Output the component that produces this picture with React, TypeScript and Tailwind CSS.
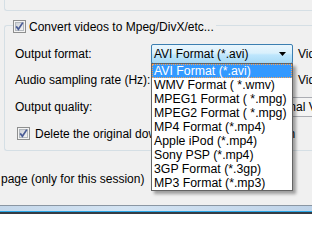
import React from "react"

const formats = [
  "AVI Format (*.avi)",
  "WMV Format ( *.wmv)",
  "MPEG1 Format ( *.mpg)",
  "MPEG2 Format ( *.mpg)",
  "MP4 Format (*.mp4)",
  "Apple iPod (*.mp4)",
  "Sony PSP (*.mp4)",
  "3GP Format (*.3gp)",
  "MP3 Format (*.mp3)",
]

function CheckBox() {
  return (
    <svg width="13" height="13" viewBox="0 0 13 13" className="shrink-0">
      <defs>
        <linearGradient id="cbfill" x1="0" y1="0" x2="1" y2="1">
          <stop offset="0" stopColor="#cbcfd5" />
          <stop offset="1" stopColor="#f6f6f6" />
        </linearGradient>
      </defs>
      <rect x="0.5" y="0.5" width="12" height="12" fill="#f4f4f4" stroke="#8e8f8f" />
      <rect x="2.5" y="2.5" width="8" height="8" fill="url(#cbfill)" stroke="#b3b8bd" />
      <path d="M3.2 6.4 L5.4 9.2 L9.8 2.6" fill="none" stroke="#4a5c96" strokeWidth="1.7" />
    </svg>
  )
}

function Arrow() {
  return (
    <svg width="7" height="4" viewBox="0 0 7 4" className="shrink-0">
      <path d="M0 0 H7 L3.5 4 Z" fill="#000" />
    </svg>
  )
}

export default function App() {
  return (
    <div className="relative flex h-[214px] w-[312px] flex-col overflow-hidden bg-[#f0f0f0] font-['Liberation_Sans',Arial,sans-serif] text-[12px] leading-none text-black">
      {/* box above */}
      <div className="ml-[4px] h-[11px] shrink-0 rounded-bl-[3px] border-b border-l border-[#d5dfe5]" />

      {/* conversion group */}
      <div className="mt-[14px] ml-[4px] flex h-[126px] shrink-0 flex-col rounded-l-[3px] border-t border-b border-l border-[#d5dfe5]">
        <div className="-mt-[6px] ml-[8px] flex w-fit items-center bg-[#f0f0f0] pr-[2px]">
          <CheckBox />
          <span className="ml-[3px] whitespace-nowrap">Convert videos to Mpeg/DivX/etc...</span>
        </div>

        <div className="mt-[11px] flex h-[20px] items-center whitespace-nowrap">
          <span className="w-[146px] shrink-0 pl-[10px]">Output format:</span>
          <div className="flex h-[20px] w-[142px] shrink-0 items-center justify-between rounded-[2px] border border-[#3c7fb1] bg-[linear-gradient(#eaf6fd,#d9f0fc_45%,#bee6fd_55%,#a7d9f5)] pr-[6px] pl-[2px]">
            <span>AVI Format (*.avi)</span>
            <Arrow />
          </div>
          <span className="ml-[5px]">Video codec:</span>
        </div>

        <div className="mt-[6px] flex h-[20px] items-center whitespace-nowrap">
          <span className="w-[146px] shrink-0 pl-[10px]">Audio sampling rate (Hz):</span>
          <div className="flex h-[20px] w-[142px] shrink-0 items-center justify-between rounded-[2px] border border-[#abadb3] bg-white pr-[6px] pl-[2px]">
            <span>44100</span>
            <Arrow />
          </div>
          <span className="ml-[5px]">Video bitrate:</span>
        </div>

        <div className="mt-[7px] flex h-[20px] items-center whitespace-nowrap">
          <span className="w-[146px] shrink-0 pl-[10px]">Output quality:</span>
          <div className="flex h-[20px] w-[180px] shrink-0 items-center rounded-[2px] border border-[#abadb3] bg-[#f4f4f4] pl-[112px]">
            <span>Original Video</span>
          </div>
        </div>

        <div className="mt-[10px] ml-[12px] flex items-center whitespace-nowrap">
          <CheckBox />
          <span className="ml-[5px]">Delete the original download after the conversion</span>
        </div>
      </div>

      <div className="mt-[22px] pl-[1px] whitespace-nowrap">page (only for this session)</div>

      {/* window frame at the bottom */}
      <div className="mt-auto flex shrink-0 flex-col">
        <div className="h-[1px] bg-[#8a96a3]" />
        <div className="h-[5px] bg-[linear-gradient(90deg,#c4d7ea,#d3e3f2_40%,#bfd3e8)]" />
        <div className="h-[1px] bg-[#2aa8e8]" />
        <div className="h-[2px] bg-[#353c44]" />
      </div>

      {/* open dropdown list */}
      <div className="absolute top-[63px] left-[151px] w-[142px] border border-[#646464] bg-white text-[12.3px] shadow-[3px_3px_3px_rgba(0,0,0,0.35)]">
        {formats.map((f, i) => (
          <div
            key={f}
            className={
              i === 0
                ? "flex h-[14px] items-center border border-dotted border-[#f5a35a] bg-[#3399ff] pl-[1px] whitespace-nowrap text-white"
                : "flex h-[14px] items-center pl-[2px] whitespace-nowrap"
            }
          >
            {f}
          </div>
        ))}
      </div>
    </div>
  )
}
